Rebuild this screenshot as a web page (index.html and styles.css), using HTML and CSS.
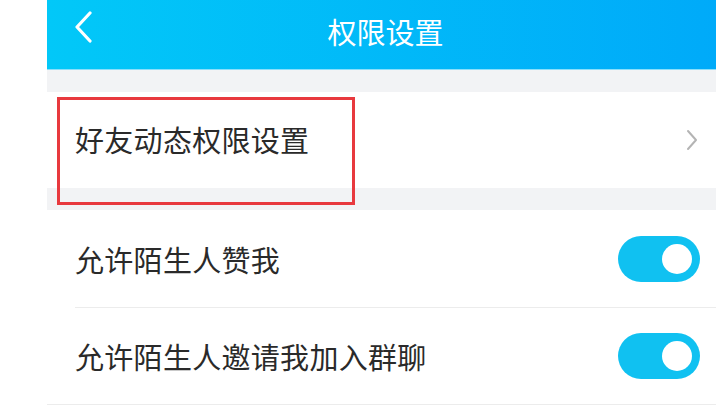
FILE: index.html
```html
<!DOCTYPE html>
<html lang="zh-CN">
<head>
  <meta charset="UTF-8">
  <meta name="viewport" content="width=device-width, initial-scale=1.0">
  <title>权限设置</title>
  <link rel="stylesheet" href="styles.css">
</head>
<body>
  <div class="app">
    <div class="header">
      <span class="back">
        <svg width="20" height="32" viewBox="0 0 20 32">
          <path d="M17 2 L4 16 L17 30" fill="none" stroke="#fff" stroke-width="3.2" stroke-linecap="round" stroke-linejoin="round"/>
        </svg>
      </span>
      <h1>权限设置</h1>
    </div>

    <div class="gap"></div>

    <div class="group first">
      <div class="row">
        <span class="label">好友动态权限设置</span>
        <svg class="arrow" width="12" height="22" viewBox="0 0 12 22">
          <path d="M2 2 L10 11 L2 20" fill="none" stroke="#b4b4b4" stroke-width="2" stroke-linecap="round" stroke-linejoin="round"/>
        </svg>
      </div>
      <div class="highlight"></div>
    </div>

    <div class="gap"></div>

    <div class="group">
      <div class="row line">
        <span class="label">允许陌生人赞我</span>
        <span class="toggle on"><span class="knob"></span></span>
      </div>
      <div class="row">
        <span class="label">允许陌生人邀请我加入群聊</span>
        <span class="toggle on"><span class="knob"></span></span>
      </div>
    </div>
  </div>
</body>
</html>
```

FILE: styles.css
```css
body {
  margin: 0;
  background: #fff;
  overflow: hidden;
  font-family: "Noto Sans CJK SC", "Noto Sans", sans-serif;
}

.app {
  margin-left: 47px;
  width: 677px;
  background: #f2f3f5;
}

.header {
  height: 69px;
  display: flex;
  align-items: center;
  justify-content: center;
  position: relative;
  background: linear-gradient(90deg, #02c8f8, #00aaf9);
  border-bottom: 1px solid #8adffb;
}

.header h1 {
  margin: 0 0 8px;
  font-size: 29px;
  font-weight: normal;
  color: #fff;
}

.back {
  position: absolute;
  left: 26px;
  top: 11px;
}

.gap {
  height: 22px;
  background: #f2f3f5;
}

.group {
  background: #fff;
  position: relative;
}

.row {
  height: 96px;
  margin-left: 28px;
  padding-right: 24px;
  display: flex;
  align-items: center;
  justify-content: space-between;
}

.row.line {
  height: 97px;
  border-bottom: 1px solid #ececec;
}

.group .row:last-child {
  border-bottom: 1px solid #ececec;
  margin-left: 0;
  padding-left: 28px;
}

.label {
  font-size: 29px;
  color: #2a2a2a;
  letter-spacing: 0.3px;
}

.first .row {
  border-bottom: none;
}

.first .label {
  margin-bottom: 2px;
}

.arrow {
  margin-right: 2px;
}

.highlight {
  position: absolute;
  left: 10px;
  top: 5px;
  width: 292px;
  height: 102px;
  border: 3px solid #e8393e;
}

.toggle {
  width: 82px;
  height: 46px;
  border-radius: 23px;
  background: #10c1f1;
  display: flex;
  align-items: center;
  justify-content: flex-end;
  padding-right: 8px;
  box-sizing: border-box;
}

.knob {
  width: 30px;
  height: 30px;
  border-radius: 50%;
  background: #fff;
}
```
